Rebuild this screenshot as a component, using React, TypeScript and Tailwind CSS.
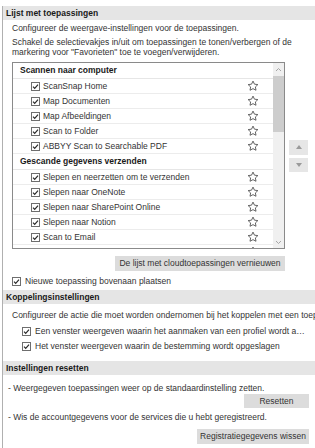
import React from "react";

function Check() {
  return (
    <svg width="9" height="9" viewBox="0 0 9 9" className="shrink-0 block">
      <rect x="0.5" y="0.5" width="8" height="8" fill="#fff" stroke="#6e6e6e" />
      <path d="M2 4.6 L3.7 6.3 L7 2.6" fill="none" stroke="#2a2a2a" strokeWidth="1.2" />
    </svg>
  );
}

function Star() {
  return (
    <svg width="12" height="12" viewBox="0 0 24 24" className="shrink-0 block">
      <path
        d="M12 2.2l2.95 6.15 6.75.85-4.95 4.65 1.25 6.7L12 17.25l-6 3.3 1.25-6.7L2.3 9.2l6.75-.85z"
        fill="none"
        stroke="#4a4a4a"
        strokeWidth="1.7"
        strokeLinejoin="round"
      />
    </svg>
  );
}

function GroupHeader({ label }: { label: string }) {
  return (
    <div className="h-[16px] flex items-center pl-[7px] border-b border-[#e6e6e6] font-bold text-[#1a1a1a]">
      {label}
    </div>
  );
}

function Item({ label }: { label: string }) {
  return (
    <div className="h-[15px] flex items-center pl-[18px] pr-[14px] border-b border-[#ececec]">
      <Check />
      <span className="ml-[3px] flex-1 whitespace-nowrap">{label}</span>
      <Star />
    </div>
  );
}

function Band({ label }: { label: string }) {
  return (
    <div className="h-[14px] bg-[#e5e5e5] pl-[3px] flex items-center font-bold text-[#1a1a1a]">
      {label}
    </div>
  );
}

export default function App() {
  return (
    <div className="w-[315px] h-[448px] bg-white overflow-hidden text-[8.5px] text-[#333] font-['Liberation_Sans',Arial,sans-serif] pt-[6px] pl-[2px]">
      <div className="h-[442px] border-l border-[#b0b0b0] flex flex-col">
        <Band label="Lijst met toepassingen" />
        <div className="pl-[9px] mt-[3px] leading-[11px] whitespace-nowrap">
          Configureer de weergave-instellingen voor de toepassingen.
        </div>
        <div className="pl-[9px] mt-[3px] leading-[10px]">
          Schakel de selectievakjes in/uit om toepassingen te tonen/verbergen of de
          <br />
          markering voor "Favorieten" toe te voegen/verwijderen.
        </div>

        <div className="mt-[5px] ml-[9px] flex items-center">
          <div className="w-[273px] h-[187px] border border-[#8a8a8a] flex overflow-hidden">
            <div className="flex-1 overflow-hidden">
              <GroupHeader label="Scannen naar computer" />
              <Item label="ScanSnap Home" />
              <Item label="Map Documenten" />
              <Item label="Map Afbeeldingen" />
              <Item label="Scan to Folder" />
              <Item label="ABBYY Scan to Searchable PDF" />
              <GroupHeader label="Gescande gegevens verzenden" />
              <Item label="Slepen en neerzetten om te verzenden" />
              <Item label="Slepen naar OneNote" />
              <Item label="Slepen naar SharePoint Online" />
              <Item label="Slepen naar Notion" />
              <Item label="Scan to Email" />
              <Item label="" />
            </div>
            <div className="w-[11px] bg-[#f0f0f0] flex flex-col items-center">
              <svg width="7" height="5" viewBox="0 0 7 5" className="mt-[4px] block">
                <path d="M1 4 L3.5 1.5 L6 4" fill="none" stroke="#a6a6a6" strokeWidth="1" />
              </svg>
              <div className="mt-[4px] w-full h-[56px] bg-[#cdcdcd]" />
              <div className="flex-1" />
              <svg width="7" height="5" viewBox="0 0 7 5" className="mb-[3px] block">
                <path d="M1 1 L3.5 3.5 L6 1" fill="none" stroke="#a6a6a6" strokeWidth="1" />
              </svg>
            </div>
          </div>
          <div className="ml-[4px] flex flex-col gap-[3px]">
            <div className="w-[19px] h-[15px] bg-[#e6e6e6] flex items-center justify-center">
              <svg width="6" height="4" viewBox="0 0 6 4" className="block">
                <path d="M0 4 L3 0 L6 4 Z" fill="#9a9a9a" />
              </svg>
            </div>
            <div className="w-[19px] h-[14px] bg-[#e6e6e6] flex items-center justify-center">
              <svg width="6" height="4" viewBox="0 0 6 4" className="block">
                <path d="M0 0 L6 0 L3 4 Z" fill="#9a9a9a" />
              </svg>
            </div>
          </div>
        </div>

        <div className="mt-[7px] ml-[9px] w-[273px] flex justify-end">
          <div className="w-[170px] h-[15px] bg-[#dcdcdc] flex items-center justify-center whitespace-nowrap">
            De lijst met cloudtoepassingen vernieuwen
          </div>
        </div>

        <div className="mt-[4px] ml-[9px] h-[12px] flex items-center">
          <Check />
          <span className="ml-[4px] whitespace-nowrap">Nieuwe toepassing bovenaan plaatsen</span>
        </div>

        <div className="mt-[3px]">
          <Band label="Koppelingsinstellingen" />
        </div>
        <div className="pl-[9px] mt-[6px] leading-[11px] whitespace-nowrap overflow-hidden">
          Configureer de actie die moet worden ondernomen bij het koppelen met een toepassing.
        </div>
        <div className="mt-[3px] pl-[19px] h-[15px] flex items-center pr-[8px]">
          <Check />
          <span className="ml-[4px] truncate">
            Een venster weergeven waarin het aanmaken van een profiel wordt aangegeven
          </span>
        </div>
        <div className="pl-[19px] h-[15px] flex items-center">
          <Check />
          <span className="ml-[4px] whitespace-nowrap">Het venster weergeven waarin de bestemming wordt opgeslagen</span>
        </div>

        <div className="mt-[7px]">
          <Band label="Instellingen resetten" />
        </div>
        <div className="pl-[5px] mt-[8px] leading-[11px] whitespace-nowrap">
          - Weergegeven toepassingen weer op de standaardinstelling zetten.
        </div>
        <div className="flex justify-end pr-[6px]">
          <div className="w-[65px] h-[14px] bg-[#dcdcdc] flex items-center justify-center">Resetten</div>
        </div>
        <div className="pl-[5px] mt-[4px] leading-[11px] whitespace-nowrap">
          - Wis de accountgegevens voor de services die u hebt geregistreerd.
        </div>
        <div className="flex justify-end pr-[6px] mt-[6px]">
          <div className="w-[112px] h-[15px] bg-[#dcdcdc] flex items-center justify-center whitespace-nowrap">
            Registratiegegevens wissen
          </div>
        </div>
      </div>
    </div>
  );
}
